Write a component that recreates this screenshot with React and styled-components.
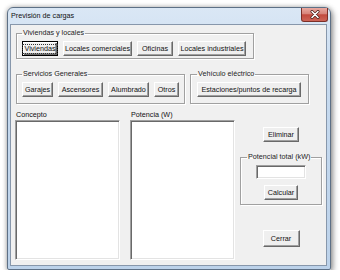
import React from 'react'
import styled, { createGlobalStyle } from 'styled-components'

const GlobalStyle = createGlobalStyle`
  body {
    margin: 0;
    background: #ffffff;
    font-family: 'Liberation Sans', Arial, sans-serif;
  }
`

const Page = styled.div`
  padding: 7px 0 0 7px;
`

const Window = styled.div`
  box-sizing: border-box;
  width: 324px;
  height: 263px;
  display: flex;
  flex-direction: column;
  padding: 0 3px 3px 2px;
  border: 1px solid #5d7086;
  border-radius: 6px 6px 2px 2px;
  background: linear-gradient(#dae7f5, #c6daef 30%, #bcd2ea);
  box-shadow: 0 0 5px rgba(0, 0, 0, 0.3), 2px 3px 6px rgba(0, 0, 0, 0.35);
`

const TitleBar = styled.div`
  height: 16px;
  display: flex;
  align-items: flex-start;
  justify-content: space-between;
  padding-left: 1px;
`

const Title = styled.span`
  font-size: 7.2px;
  line-height: 16px;
  color: #111;
`

const CloseButton = styled.div`
  width: 27px;
  height: 14px;
  margin-right: -1px;
  display: flex;
  align-items: center;
  justify-content: center;
  box-sizing: border-box;
  border: 1px solid #7b2f28;
  border-top: none;
  border-radius: 0 0 3px 3px;
  background: linear-gradient(#e9aaa1, #d7847a 45%, #c24a3e 52%, #cd6457);
`

const Client = styled.div`
  flex: 1;
  display: flex;
  flex-direction: column;
  padding: 4px 0 0 5px;
  border: 1px solid #8797ab;
  background: #f0f0f0;
  font-size: 7.2px;
  color: #111;
`

const Group = styled.fieldset`
  box-sizing: border-box;
  width: ${p => p.$w}px;
  margin: 0;
  min-width: 0;
  padding: 4px ${p => p.$px || 5}px ${p => p.$pb || 2}px;
  border: 1px solid #a0a0a0;
  box-shadow: inset 1px 1px #fff, 1px 1px #fff;
  display: flex;
  flex-direction: ${p => (p.$column ? 'column' : 'row')};
  align-items: ${p => (p.$column ? 'center' : 'flex-start')};
  gap: 5px;
`

const Legend = styled.legend`
  font-size: 7.2px;
  line-height: 8px;
  padding: 0 1px;
  color: #222;
`

const GroupRow = styled.div`
  display: flex;
  gap: 5px;
  margin-top: 11px;
`

const Button = styled.button`
  box-sizing: border-box;
  width: ${p => p.$w}px;
  height: ${p => p.$h || 15}px;
  margin-top: ${p => p.$mt || 0}px;
  flex: none;
  padding: 0;
  font-family: 'Liberation Sans', Arial, sans-serif;
  font-size: 7.2px;
  color: #111;
  background: #efefef;
  border: 1px solid;
  border-color: #fff #696969 #696969 #fff;
  box-shadow: inset -1px -1px #a0a0a0;
  display: flex;
  align-items: center;
  justify-content: center;

  ${p =>
    p.$focused &&
    `
    border: 1px solid #000;
    box-shadow: inset 1px 1px #fff, inset -1px -1px #696969, inset -2px -2px #a0a0a0;
  `}
`

const FocusText = styled.span`
  padding: 0 1px;
  outline: 1px dotted #333;
  line-height: 8px;
`

const Lower = styled.div`
  display: flex;
  margin: 7px 0 0 -1px;
`

const ListColumn = styled.div`
  width: 105px;
  margin-right: ${p => p.$mr}px;
  display: flex;
  flex-direction: column;
  gap: 1px;
`

const Label = styled.div`
  line-height: 8px;
  padding-left: 1px;
`

const Sunken = styled.div`
  box-sizing: border-box;
  background: #fff;
  border: 1px solid;
  border-color: #a0a0a0 #fff #fff #a0a0a0;
  box-shadow: inset 1px 1px #696969, inset -1px -1px #e3e3e3;
`

const ListBox = styled(Sunken)`
  height: 140px;
`

const TextBox = styled(Sunken)`
  width: 50px;
  height: 14px;
`

const RightColumn = styled.div`
  width: 82px;
  display: flex;
  flex-direction: column;
  align-items: center;
  padding-top: 16px;
`

const TotalGroup = styled(Group)`
  margin-top: 11px;
  gap: 6px;
`

const CloseGlyph = () => (
  <svg width="10" height="9" viewBox="0 0 10 9">
    <path d="M2 1.5 L8 7.5 M8 1.5 L2 7.5" stroke="#4a1d19" strokeWidth="3" strokeLinecap="round" />
    <path d="M2 1.5 L8 7.5 M8 1.5 L2 7.5" stroke="#fff" strokeWidth="1.6" strokeLinecap="round" />
  </svg>
)

export default function App () {
  return (
    <Page>
      <GlobalStyle />
      <Window>
        <TitleBar>
          <Title>Previsión de cargas</Title>
          <CloseButton>
            <CloseGlyph />
          </CloseButton>
        </TitleBar>
        <Client>
          <Group $w={238}>
            <Legend>Viviendas y locales</Legend>
            <Button $w={36} $focused>
              <FocusText>Viviendas</FocusText>
            </Button>
            <Button $w={69}>Locales comerciales</Button>
            <Button $w={36}>Oficinas</Button>
            <Button $w={68}>Locales industriales</Button>
          </Group>
          <GroupRow>
            <Group $w={169} $pb={6}>
              <Legend>Servicios Generales</Legend>
              <Button $w={31}>Garajes</Button>
              <Button $w={45}>Ascensores</Button>
              <Button $w={41}>Alumbrado</Button>
              <Button $w={25}>Otros</Button>
            </Group>
            <Group $w={119} $px={6} $pb={6}>
              <Legend>Vehículo eléctrico</Legend>
              <Button $w={104}>Estaciones/puntos de recarga</Button>
            </Group>
          </GroupRow>
          <Lower>
            <ListColumn $mr={10}>
              <Label>Concepto</Label>
              <ListBox />
            </ListColumn>
            <ListColumn $mr={5}>
              <Label>Potencia (W)</Label>
              <ListBox />
            </ListColumn>
            <RightColumn>
              <Button $w={36}>Eliminar</Button>
              <TotalGroup $w={82} $px={6} $pb={4} $column>
                <Legend>Potencial total (kW)</Legend>
                <TextBox />
                <Button $w={34}>Calcular</Button>
              </TotalGroup>
              <Button $w={37} $h={17} $mt={25}>Cerrar</Button>
            </RightColumn>
          </Lower>
        </Client>
      </Window>
    </Page>
  )
}
